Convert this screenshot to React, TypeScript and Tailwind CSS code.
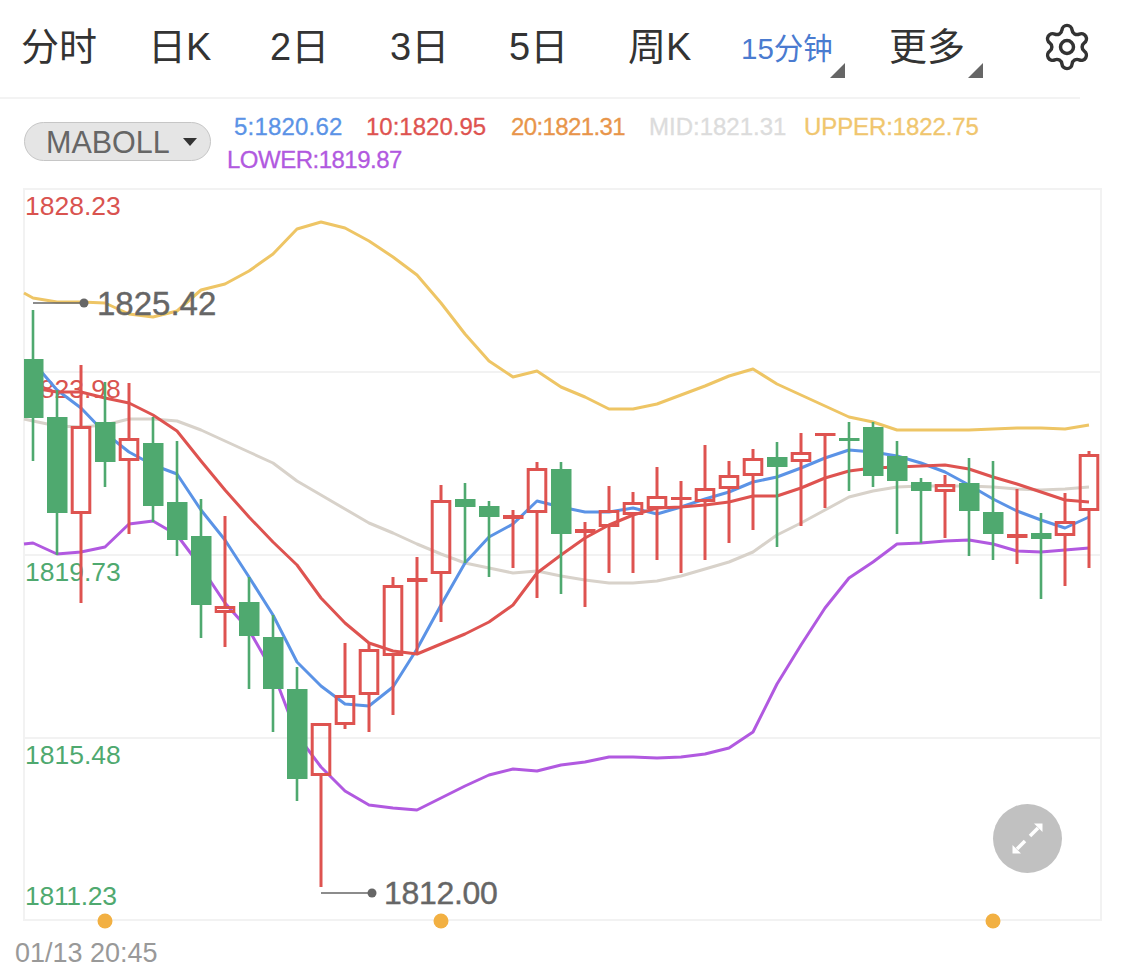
import React from 'react';
import { Settings } from 'lucide-react';

// x of candle i is 33 + 24 * i
const candleX = (i: number) => 33 + 24 * i;

// [kind, high, low, bodyTop, bodyBottom]
const candles: [string, number, number, number, number][] = [
  ['g', 310, 461, 359, 418], ['g', 390, 555, 417, 513], ['r', 365, 603, 426, 514], ['g', 382, 487, 422, 462],
  ['r', 383, 534, 438, 461], ['g', 417, 522, 443, 506], ['g', 441, 556, 502, 540], ['g', 499, 638, 536, 605],
  ['r', 516, 647, 606, 613], ['g', 577, 689, 602, 636], ['g', 615, 732, 637, 689], ['g', 667, 801, 689, 779],
  ['r', 723, 887, 723, 776], ['r', 643, 729, 695, 725], ['r', 643, 732, 649, 695], ['r', 577, 715, 585, 656],
  ['r', 557, 653, 578, 582], ['r', 485, 622, 500, 574], ['g', 483, 563, 499, 507], ['g', 501, 577, 506, 517],
  ['r', 510, 568, 515, 519], ['r', 462, 598, 468, 513], ['g', 462, 594, 469, 534], ['r', 522, 607, 529, 533],
  ['r', 486, 573, 510, 527], ['r', 492, 573, 502, 515], ['r', 467, 560, 496, 509], ['r', 481, 573, 497, 500],
  ['r', 445, 560, 488, 502], ['r', 461, 543, 475, 489], ['r', 449, 530, 458, 476], ['g', 442, 547, 457, 467],
  ['r', 433, 526, 452, 462], ['r', 433, 508, 433, 436], ['g', 422, 491, 438, 441], ['g', 422, 487, 427, 476],
  ['g', 441, 534, 456, 481], ['g', 478, 543, 482, 491], ['r', 475, 538, 484, 492], ['g', 458, 556, 483, 511],
  ['g', 461, 560, 512, 534], ['r', 489, 564, 534, 538], ['g', 513, 599, 533, 539], ['r', 493, 586, 521, 536],
  ['r', 451, 568, 454, 511],
];

const upper = '24,293 33,298 57,302 81,302 105,303 129,314 153,317 177,311 201,290 225,284 249,271 273,254 297,229 321,222 345,228 369,241 393,257 417,275 441,303 465,334 489,361 513,377 537,371 561,387 585,397 609,409 633,409 657,404 681,395 705,386 729,376 753,369 777,384 801,395 825,406 849,417 873,422 897,430 921,430 945,430 969,430 993,429 1017,428 1041,428 1065,429 1089,425';
const mid = '24,419 33,421 57,426 81,427 105,425 129,419 153,419 177,421 201,430 225,441 249,452 273,463 297,481 321,495 345,509 369,523 393,533 417,544 441,554 465,563 489,568 513,573 537,571 561,576 585,580 609,583 633,583 657,581 681,576 705,569 729,562 753,552 777,535 801,523 825,510 849,497 873,491 897,487 921,486 945,486 969,486 993,487 1017,489 1041,490 1065,489 1089,487';
const lower = '24,544 33,543 57,554 81,552 105,547 129,524 153,521 177,535 201,567 225,603 249,630 273,672 297,735 321,767 345,791 369,805 393,808 417,810 441,798 465,786 489,775 513,769 537,771 561,765 585,762 609,757 633,757 657,758 681,757 705,754 729,748 753,732 777,684 801,645 825,608 849,578 873,562 897,544 921,543 945,541 969,540 993,544 1017,551 1041,552 1065,550 1089,548';
const ma5 = '33,362 57,390 81,408 105,433 129,452 153,465 177,474 201,510 225,540 249,577 273,615 297,662 321,686 345,704 369,706 393,687 417,649 441,605 465,563 489,537 513,524 537,501 561,507 585,512 609,512 633,508 657,514 681,507 705,499 729,492 753,482 777,477 801,468 825,458 849,450 873,452 897,456 921,463 945,472 969,485 993,499 1017,511 1041,520 1065,528 1089,517';
const ma10 = '33,388 57,392 81,392 105,398 129,403 153,415 177,431 201,461 225,490 249,517 273,542 297,565 321,598 345,623 369,643 393,651 417,654 441,644 465,634 489,622 513,605 537,573 561,555 585,538 609,525 633,515 657,508 681,507 705,505 729,502 753,496 777,496 801,488 825,478 849,471 873,468 897,467 921,466 945,465 969,469 993,477 1017,484 1041,492 1065,500 1089,502';

const tabs = [
  { label: '分时', width: 'w-[127px]' },
  { label: '日K', width: 'w-[122px]' },
  { label: '2日', width: 'w-[120px]' },
  { label: '3日', width: 'w-[119px]' },
  { label: '5日', width: 'w-[119px]' },
  { label: '周K', width: 'w-[113px]' },
];

const Corner = ({ className }: { className: string }) => (
  <span className={`absolute top-[63px] w-0 h-0 border-l-[15px] border-l-transparent border-b-[15px] border-b-[#666666] ${className}`} />
);

function Candle({ kind, x, high, low, top, bottom }: { kind: string; x: number; high: number; low: number; top: number; bottom: number }) {
  const color = kind === 'g' ? '#4fa96f' : '#de5350';
  const left = Math.max(x - 10, 24);
  const h = bottom - top;
  if (kind === 'g' || h < 6) {
    return (
      <g>
        <line x1={x} x2={x} y1={high} y2={low} stroke={color} strokeWidth={kind === 'g' ? 2.6 : 3} />
        <rect x={left} y={top} width={x + 10.5 - left} height={h} fill={color} />
      </g>
    );
  }
  return (
    <g stroke={color} strokeWidth={3} fill="none">
      <line x1={x} x2={x} y1={high} y2={top} />
      <line x1={x} x2={x} y1={bottom} y2={low} />
      <rect x={x - 8.8} y={top + 1.5} width={17.6} height={h - 3} />
    </g>
  );
}

export default function App() {
  return (
    <div className="relative w-[1125px] h-[971px] bg-white overflow-hidden font-['Liberation_Sans','Noto_Sans_CJK_SC',sans-serif]">
      {/* Tabs */}
      <div className="flex items-center h-[99px] w-[1080px] pl-[21px] pb-[3px] border-b-2 border-[#f3f3f3] text-[38px] text-[#333333]">
        {tabs.map((t) => (
          <span key={t.label} className={`${t.width} shrink-0 whitespace-nowrap`}>{t.label}</span>
        ))}
        <span className="w-[148px] shrink-0 whitespace-nowrap text-[29.5px] text-[#4a7bd0] pt-[4px]">15分钟</span>
        <span className="w-[152px] shrink-0 whitespace-nowrap">更多</span>
        <Settings size={52} strokeWidth={1.6} className="shrink-0 text-[#333333]" />
      </div>
      <Corner className="left-[830px]" />
      <Corner className="left-[968px]" />

      {/* Indicator row */}
      <div className="flex h-[89px] pl-[24px]">
        <div className="mt-[23px] flex items-center justify-between w-[187px] h-[39px] pl-[21px] pr-[13px] rounded-full bg-[#e5e5e5] border border-[#c6c6c6] text-[30.5px] text-[#666666]">
          <span className="pt-[3px]">MABOLL</span>
          <span className="w-0 h-0 border-x-[7.5px] border-x-transparent border-t-[8px] border-t-[#333333]" />
        </div>
        <div className="flex flex-col text-[24px] leading-[33px] pt-[11px] [-webkit-text-stroke:0.3px]">
          <div className="flex pl-[23px] whitespace-nowrap">
            <span className="w-[132px] text-[#5b93e6] tracking-[0.2px]">5:1820.62</span>
            <span className="w-[145px] text-[#de5350]">10:1820.95</span>
            <span className="w-[138px] text-[#e8954a] tracking-[-0.6px]">20:1821.31</span>
            <span className="w-[155px] text-[#dcdcdc]">MID:1821.31</span>
            <span className="text-[#f0c66e] tracking-[-0.1px]">UPPER:1822.75</span>
          </div>
          <div className="pl-[16px] text-[#b159e0] tracking-[-0.5px]">LOWER:1819.87</div>
        </div>
      </div>

      {/* Chart */}
      <div className="relative ml-[23px] w-[1079px] h-[733px] border-2 border-[#f2f2f2] text-[26.5px] leading-none">
        <span className="absolute left-[0px] top-[3px] text-[#d9534f]">1828.23</span>
        <span className="absolute left-[0px] top-[186px] text-[#d9534f]">1823.98</span>
        <span className="absolute left-[0px] top-[369px] text-[#4fa96f]">1819.73</span>
        <span className="absolute left-[0px] top-[552px] text-[#4fa96f]">1815.48</span>
        <span className="absolute left-[0px] top-[693px] text-[#4fa96f] tracking-[-0.3px]">1811.23</span>

        <svg viewBox="23 188 1079 733" className="absolute -left-[2px] -top-[2px] w-[1079px] h-[733px] overflow-visible">
          <g stroke="#f2f2f2" strokeWidth={2}>
            <line x1={24} x2={1101} y1={372} y2={372} />
            <line x1={24} x2={1101} y1={555} y2={555} />
            <line x1={24} x2={1101} y1={738} y2={738} />
          </g>
          <g fill="none" strokeWidth={3} strokeLinejoin="round">
            <polyline points={upper} stroke="#eec565" />
            <polyline points={mid} stroke="#d8d2ca" />
            <polyline points={lower} stroke="#b159e0" />
            <polyline points={ma5} stroke="#5b93e6" />
            <polyline points={ma10} stroke="#de5350" />
          </g>
          {candles.map(([kind, high, low, top, bottom], i) => (
            <Candle key={i} kind={kind} x={candleX(i)} high={high} low={low} top={top} bottom={bottom} />
          ))}
          <line x1={33} x2={84} y1={303} y2={303} stroke="#666666" strokeWidth={1.5} />
          <circle cx={84} cy={303} r={4.5} fill="#666666" />
          <line x1={321} x2={372} y1={893} y2={893} stroke="#666666" strokeWidth={1.5} />
          <circle cx={372} cy={893} r={4.5} fill="#666666" />
          <circle cx={105} cy={921} r={7.5} fill="#f2b042" />
          <circle cx={441} cy={921} r={7.5} fill="#f2b042" />
          <circle cx={993} cy={921} r={7.5} fill="#f2b042" />
        </svg>

        <span className="absolute left-[72px] top-[97px] text-[33px] text-[#666666] [-webkit-text-stroke:0.4px]">1825.42</span>
        <span className="absolute left-[359px] top-[687px] text-[32px] text-[#666666] tracking-[-0.3px] [-webkit-text-stroke:0.4px]">1812.00</span>

        {/* Fullscreen button */}
        <button className="absolute left-[968px] top-[614px] w-[69px] h-[69px] rounded-full bg-[#c1c1c1] flex items-center justify-center">
          <svg viewBox="0 0 69 69" className="w-[69px] h-[69px]">
            <path d="M37 32 L45 24" stroke="#fff" strokeWidth={3.5} />
            <path d="M41 19.5 H49.5 V28 Z" fill="#fff" />
            <path d="M32 37 L24 45" stroke="#fff" strokeWidth={3.5} />
            <path d="M28 49.5 H19.5 V41 Z" fill="#fff" />
          </svg>
        </button>
      </div>

      <div className="pl-[15px] pt-[19px] text-[27px] leading-none text-[#999999]">01/13 20:45</div>
    </div>
  );
}
